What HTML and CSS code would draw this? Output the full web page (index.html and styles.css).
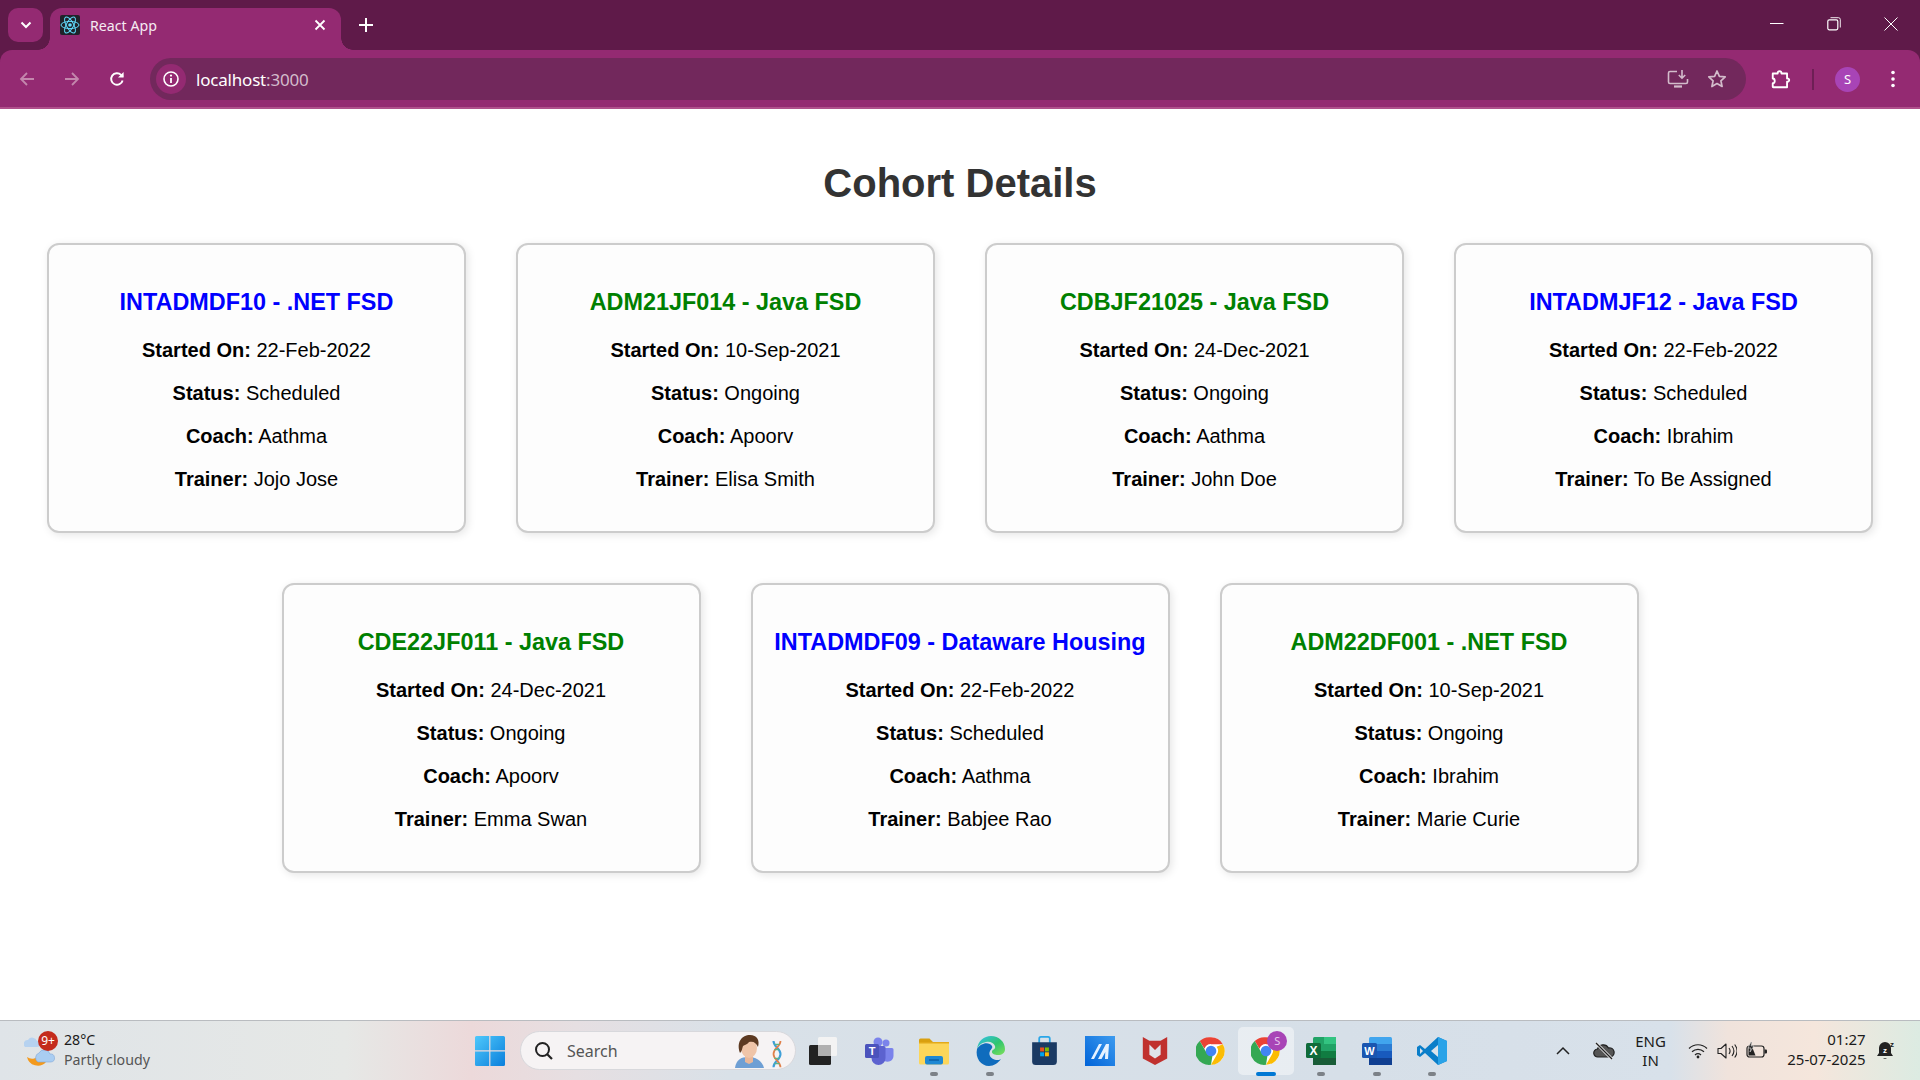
FILE: index.html
```html
<!DOCTYPE html>
<html lang="en">
<head>
<meta charset="utf-8">
<title>React App</title>
<link rel="stylesheet" href="styles.css">
</head>
<body>
<div class="screen">
  <header class="browser">
    <div class="tabstrip">
      <button class="tabsearch"><svg width="14" height="14" viewBox="0 0 14 14"><path d="M2.5 4.5 7 9l4.5-4.5" fill="none" stroke="#fff" stroke-width="2"/></svg></button>
      <div class="tab">
        <svg class="favicon" width="20" height="20" viewBox="0 0 20 20"><rect width="20" height="20" rx="2" fill="#20232a"/><g fill="none" stroke="#61dafb" stroke-width="1"><ellipse cx="10" cy="10" rx="9" ry="3.6"/><ellipse cx="10" cy="10" rx="9" ry="3.6" transform="rotate(60 10 10)"/><ellipse cx="10" cy="10" rx="9" ry="3.6" transform="rotate(120 10 10)"/></g><circle cx="10" cy="10" r="1.8" fill="#61dafb"/></svg>
        <span class="tabtitle">React App</span>
        <svg class="tabclose" width="12" height="12" viewBox="0 0 12 12"><path d="M1.5 1.5l9 9M10.5 1.5l-9 9" stroke="#fff" stroke-width="1.8"/></svg>
      </div>
      <svg class="newtab" width="14" height="14" viewBox="0 0 14 14"><path d="M7 0v14M0 7h14" stroke="#fff" stroke-width="2"/></svg>
      <div class="winctrls">
        <svg width="14" height="14" viewBox="0 0 14 14"><path d="M0 6.5h13.5" stroke="#fff" stroke-width="1"/></svg>
        <svg width="14" height="14" viewBox="0 0 14 14"><rect x=".8" y="2.8" width="10" height="10" rx="1.5" fill="none" stroke="#fff" stroke-width="1.2"/><path d="M3.5.7h8a1.8 1.8 0 0 1 1.8 1.8v8" fill="none" stroke="#fff" stroke-width=".9"/></svg>
        <svg width="14" height="14" viewBox="0 0 14 14"><path d="M.5.5l13 13M13.5.5l-13 13" stroke="#fff" stroke-width="1"/></svg>
      </div>
    </div>
    <div class="toolbar">
      <div class="navbtns">
        <svg width="18" height="18" viewBox="0 0 18 18"><path d="M16 9H3M9 3 3 9l6 6" fill="none" stroke="#c387ad" stroke-width="1.8"/></svg>
        <svg width="18" height="18" viewBox="0 0 18 18"><path d="M2 9h13M9 3l6 6-6 6" fill="none" stroke="#c387ad" stroke-width="1.8"/></svg>
        <svg width="18" height="18" viewBox="0 0 18 18"><path d="M14.6 10.4a5.8 5.8 0 1 1-1.5-5.5L15 6.6" fill="none" stroke="#fff" stroke-width="1.9"/><path d="M15.6 2v5.6H10z" fill="#fff"/></svg>
      </div>
      <div class="omnibox">
        <span class="siteinfo"><svg width="18" height="18" viewBox="0 0 18 18"><circle cx="9" cy="9" r="7" fill="none" stroke="#fff" stroke-width="1.6"/><path d="M9 8v5" stroke="#fff" stroke-width="1.8"/><circle cx="9" cy="5.6" r="1.1" fill="#fff"/></svg></span>
        <span class="url">localhost<span class="port">:3000</span></span>
        <span class="omni-right">
          <svg width="22" height="20" viewBox="0 0 22 20"><path d="M10 2.5H3A1.5 1.5 0 0 0 1.5 4v9A1.5 1.5 0 0 0 3 14.5h16a1.5 1.5 0 0 0 1.5-1.5V10" fill="none" stroke="#d3bccb" stroke-width="1.6"/><path d="M7 17.5h8" stroke="#d3bccb" stroke-width="2.2"/><path d="M15 1v8M11.8 6l3.2 3.2L18.2 6" fill="none" stroke="#d3bccb" stroke-width="1.6"/></svg>
          <svg width="20" height="20" viewBox="0 0 20 20"><path d="m10 2 2.400 5.300 5.800.6-4.300 3.900 1.200 5.700L10 14.600 4.900 17.500l1.200-5.700L1.800 7.900l5.800-.6z" fill="none" stroke="#d3bccb" stroke-width="1.7" stroke-linejoin="round"/></svg>
        </span>
      </div>
      <div class="toolright">
        <svg class="ext" width="22" height="22" viewBox="0 0 20 20"><path d="M2.500 5H7c-.4-2.800 3.800-2.800 3.400 0h5.100v4.600c2.600-.5 2.600 3.300 0 2.800v5.100h-12.500c-.4 0-.5-.3-.5-.5v-3.200c2.400.3 2.400-4.300 0-4.300V5.500c0-.3.200-.5.500-.5z" fill="none" stroke="#fff" stroke-width="1.7" stroke-linejoin="round"/></svg>
        <span class="divider"></span>
        <span class="avatar">S</span>
        <svg class="dots" width="6" height="20" viewBox="0 0 6 20"><circle cx="3" cy="3.5" r="1.8" fill="#fff"/><circle cx="3" cy="10" r="1.8" fill="#fff"/><circle cx="3" cy="16.5" r="1.8" fill="#fff"/></svg>
      </div>
    </div>
  </header>

  <main class="page">
    <h1 class="heading">Cohort Details</h1>
    <div class="cards">
      <article class="card">
        <h3 class="cname scheduled">INTADMDF10 - .NET FSD</h3>
        <p><b>Started On:</b> 22-Feb-2022</p>
        <p><b>Status:</b> Scheduled</p>
        <p><b>Coach:</b> Aathma</p>
        <p><b>Trainer:</b> Jojo Jose</p>
      </article>
      <article class="card">
        <h3 class="cname ongoing">ADM21JF014 - Java FSD</h3>
        <p><b>Started On:</b> 10-Sep-2021</p>
        <p><b>Status:</b> Ongoing</p>
        <p><b>Coach:</b> Apoorv</p>
        <p><b>Trainer:</b> Elisa Smith</p>
      </article>
      <article class="card">
        <h3 class="cname ongoing">CDBJF21025 - Java FSD</h3>
        <p><b>Started On:</b> 24-Dec-2021</p>
        <p><b>Status:</b> Ongoing</p>
        <p><b>Coach:</b> Aathma</p>
        <p><b>Trainer:</b> John Doe</p>
      </article>
      <article class="card">
        <h3 class="cname scheduled">INTADMJF12 - Java FSD</h3>
        <p><b>Started On:</b> 22-Feb-2022</p>
        <p><b>Status:</b> Scheduled</p>
        <p><b>Coach:</b> Ibrahim</p>
        <p><b>Trainer:</b> To Be Assigned</p>
      </article>
      <article class="card">
        <h3 class="cname ongoing">CDE22JF011 - Java FSD</h3>
        <p><b>Started On:</b> 24-Dec-2021</p>
        <p><b>Status:</b> Ongoing</p>
        <p><b>Coach:</b> Apoorv</p>
        <p><b>Trainer:</b> Emma Swan</p>
      </article>
      <article class="card">
        <h3 class="cname scheduled">INTADMDF09 - Dataware Housing</h3>
        <p><b>Started On:</b> 22-Feb-2022</p>
        <p><b>Status:</b> Scheduled</p>
        <p><b>Coach:</b> Aathma</p>
        <p><b>Trainer:</b> Babjee Rao</p>
      </article>
      <article class="card">
        <h3 class="cname ongoing">ADM22DF001 - .NET FSD</h3>
        <p><b>Started On:</b> 10-Sep-2021</p>
        <p><b>Status:</b> Ongoing</p>
        <p><b>Coach:</b> Ibrahim</p>
        <p><b>Trainer:</b> Marie Curie</p>
      </article>
    </div>
  </main>

  <footer class="taskbar">
    <div class="weather">
      <span class="wicon">
        <svg width="32" height="34" viewBox="0 0 32 34"><path d="M3 24a11 11 0 0 0 19 5 8 8 0 0 1-6-8 9 9 0 0 1-13 3z" fill="#f39a1e"/><path d="M14 29a5 5 0 0 1 1-9 6 6 0 0 1 11 1 4 4 0 0 1 1 8z" fill="#a9cdf2" stroke="#7fa8d8" stroke-width=".6"/><path d="M1 14a4 4 0 0 1 3-7 5 5 0 0 1 9 1 3 3 0 0 1 0 6z" fill="#b6d2f0"/></svg>
        <span class="wbadge">9+</span>
      </span>
      <span class="wtext"><span class="wtemp">28°C</span><span class="wdesc">Partly cloudy</span></span>
    </div>
    <div class="center">
      <svg class="start" width="30" height="30" viewBox="0 0 30 30"><defs><linearGradient id="w1" x1="0" y1="0" x2="1" y2="1"><stop offset="0" stop-color="#4fc8fb"/><stop offset="1" stop-color="#0a7fdc"/></linearGradient></defs><path d="M0 1.5A1.5 1.5 0 0 1 1.5 0h12.700v14.200H0zM15.400 0h13.100A1.500 1.500 0 0 1 30 1.500v12.700H15.400zM0 15.400h14.200V30H1.500A1.500 1.500 0 0 1 0 28.500zM15.400 15.400H30v13.100a1.500 1.500 0 0 1-1.500 1.500H15.400z" fill="url(#w1)"/></svg>
      <div class="search">
        <svg width="20" height="20" viewBox="0 0 20 20"><circle cx="8.5" cy="8.5" r="6.5" fill="none" stroke="#222" stroke-width="2"/><path d="m13 13 5 5" stroke="#222" stroke-width="2.2"/></svg>
        <span class="searchtext">Search</span>
        <span class="searchart">
          <svg width="34" height="34" viewBox="0 0 34 34"><path d="M2 34c1-8 6-11 13-11s14 3 16 11z" fill="#6f9fd4"/><path d="M12 22h8v6l-4 2-4-2z" fill="#e9b79a"/><ellipse cx="16" cy="14" rx="8" ry="10" fill="#efc4a8"/><path d="M7 19C3 8 9 1 17 1c7 0 10 5 8 12-2-4-4-6-9-5-2 3-5 3-6 4-1 3-1 5-3 7z" fill="#5d3a22"/></svg>
          <svg width="14" height="28" viewBox="0 0 14 32"><path d="M3 1c0 7 8 8 8 15S3 24 3 31" fill="none" stroke="#3f9fd8" stroke-width="2.4"/><path d="M11 1c0 7-8 8-8 15s8 8 8 15" fill="none" stroke="#e0804a" stroke-width="2"/><path d="M4 5h6M4 11h6M4 21h6M4 27h6" stroke="#5cb487" stroke-width="1.5"/></svg>
        </span>
      </div>
      <div class="apps">
        <span class="app"><svg width="30" height="28" viewBox="0 0 30 28"><rect x="9" y="0" width="19" height="19" rx="1.5" fill="#f3f3f3"/><rect x="0" y="8" width="22" height="20" rx="1.5" fill="#222"/><rect x="9" y="8" width="13" height="11" fill="#b0b0b0"/></svg></span>
        <span class="app"><svg width="30" height="28" viewBox="0 0 30 28"><circle cx="22" cy="6" r="3.5" fill="#7b83eb"/><path d="M17 11h11a1.5 1.5 0 0 1 1.5 1.5V19a6 6 0 0 1-9 5z" fill="#7b83eb"/><circle cx="14" cy="5" r="4.5" fill="#7b83eb"/><path d="M7 9h13a1.5 1.5 0 0 1 1.5 1.5V21a7 7 0 0 1-14 0z" fill="#5c62cf"/><rect x="1" y="7" width="14" height="14" rx="1.5" fill="#4b53bc"/><text x="8" y="18" class="glyph" font-size="11" text-anchor="middle">T</text></svg></span>
        <span class="app has-dot"><svg width="30" height="28" viewBox="0 0 30 28"><path d="M0 3a1.5 1.5 0 0 1 1.5-1.5h9L14 5H0z" fill="#d9a010"/><path d="M0 5h30v21a1.5 1.5 0 0 1-1.5 1.5h-27A1.5 1.5 0 0 1 0 26z" fill="#fcd65a"/><path d="M0 5h30v1.5H0z" fill="#e3aa1a"/><rect x="6" y="19" width="18" height="8.5" rx="2" fill="#1e88d3"/><path d="M10 23h10" stroke="#0b5fa6" stroke-width="1.5"/></svg></span>
        <span class="app has-dot"><svg width="30" height="30" viewBox="0 0 30 30"><defs><linearGradient id="e1" x1="0" y1="0" x2="1" y2="1"><stop offset="0" stop-color="#35c1f1"/><stop offset=".55" stop-color="#2fc56f"/><stop offset="1" stop-color="#7fe05a"/></linearGradient></defs><path d="M2 13C3 5 9 0 16 0c8 0 14 6 14 13 0 4-3 6-7 6-3 0-6-1-6-3 0-3 4-2 3-6-1-3-5-5-9-4-5 1-8 4-9 7z" fill="url(#e1)"/><path d="M2 13c3-6 12-8 15-3 1 2-1 3-2 5-2 4 1 8 6 9 2 0 4 0 5-1-3 4-7 7-12 7C6 30 0 22 2 13z" fill="#0f6cbd"/></svg></span>
        <span class="app"><svg width="29" height="30" viewBox="0 0 30 34"><path d="M9 8V3a2 2 0 0 1 2-2h8a2 2 0 0 1 2 2v5" fill="none" stroke="#2aa6e8" stroke-width="2"/><path d="M1 7h28v22a4 4 0 0 1-4 4H5a4 4 0 0 1-4-4z" fill="#1b3a63"/><rect x="10" y="13" width="4.5" height="4.5" fill="#e8501f"/><rect x="15.5" y="13" width="4.5" height="4.5" fill="#7fba00"/><rect x="10" y="18.5" width="4.5" height="4.5" fill="#00a4ef"/><rect x="15.5" y="18.5" width="4.5" height="4.5" fill="#ffb900"/></svg></span>
        <span class="app"><svg width="30" height="30" viewBox="0 0 30 30"><defs><linearGradient id="m1" x1="1" y1="0" x2="0" y2="1"><stop offset="0" stop-color="#3d9bef"/><stop offset="1" stop-color="#0063d8"/></linearGradient></defs><rect width="30" height="30" fill="url(#m1)"/><path d="M6 23 14 8h3L9 23zM13 23 21 8h3l-1 15h-3l.3-7-3.800 7z" fill="#e6f2ff"/></svg></span>
        <span class="app"><svg width="28" height="30" viewBox="0 0 28 32"><path d="M1 1l7 4h12l7-4v23l-13 7L1 24z" fill="#c0312e"/><path d="M8 9v11l6 4 6-4V9l-6 6z" fill="#dfe3ea"/></svg></span>
        <span class="app"><svg width="30" height="30" viewBox="0 0 48 48"><circle cx="24" cy="24" r="22" fill="#fff"/><path d="M24 2a22 22 0 0 1 19 11H24a11 11 0 0 0-10.5 7.5L6 8A22 22 0 0 1 24 2z" fill="#ea4335"/><path d="M43 13a22 22 0 0 1-19 33l9.500-16.500A11 11 0 0 0 33 17z" fill="#fbbc04"/><path d="M24 46A22 22 0 0 1 6 8l9.500 16.500a11 11 0 0 0 11 6z" fill="#34a853"/><circle cx="24" cy="24" r="8.5" fill="#4285f4"/></svg></span>
        <span class="app active"><svg width="30" height="30" viewBox="0 0 48 48"><circle cx="24" cy="24" r="22" fill="#fff"/><path d="M24 2a22 22 0 0 1 19 11H24a11 11 0 0 0-10.5 7.5L6 8A22 22 0 0 1 24 2z" fill="#ea4335"/><path d="M43 13a22 22 0 0 1-19 33l9.500-16.500A11 11 0 0 0 33 17z" fill="#fbbc04"/><path d="M24 46A22 22 0 0 1 6 8l9.500 16.500a11 11 0 0 0 11 6z" fill="#34a853"/><circle cx="24" cy="24" r="8.5" fill="#4285f4"/></svg><span class="appbadge">S</span></span>
        <span class="app has-dot"><svg width="30" height="30" viewBox="0 0 30 30"><rect x="7" y="1" width="23" height="28" rx="1.5" fill="#21a366"/><rect x="18" y="1" width="12" height="7" fill="#33c481"/><rect x="7" y="15" width="23" height="7" fill="#107c41"/><rect x="7" y="22" width="23" height="7" fill="#185c37"/><rect x="0" y="7" width="15" height="15" rx="1.5" fill="#0f6b3a"/><text x="7.5" y="18.5" class="glyph" font-size="12" text-anchor="middle">X</text></svg></span>
        <span class="app has-dot"><svg width="30" height="30" viewBox="0 0 30 30"><rect x="7" y="1" width="23" height="28" rx="1.5" fill="#41a5ee"/><rect x="7" y="8" width="23" height="7" fill="#2b7cd3"/><rect x="7" y="15" width="23" height="7" fill="#185abd"/><rect x="7" y="22" width="23" height="7" fill="#103f91"/><rect x="0" y="7" width="15" height="15" rx="1.5" fill="#1a56b0"/><text x="7.5" y="18.5" class="glyph" font-size="11" text-anchor="middle">W</text></svg></span>
        <span class="app has-dot"><svg width="30" height="30" viewBox="0 0 30 30"><path d="M21 1 30 5v20l-9 4L8 17 3 21l-3-2v-8l3-2 5 4z" fill="#0a7ec9"/><path d="M21 1 30 5v20l-9 4z" fill="#2aa3e8"/><path d="M21 9v12l-7-6z" fill="#dbe3eb"/><path d="M3 12v6l3-3z" fill="#dbe3eb"/></svg></span>
      </div>
    </div>
    <div class="tray">
      <svg class="chev" width="14" height="9" viewBox="0 0 14 9"><path d="m1 8 6-6 6 6" fill="none" stroke="#222" stroke-width="1.5"/></svg>
      <svg class="cloud" width="22" height="18" viewBox="0 0 22 18"><path d="M5 15a4 4 0 0 1-.5-8 6 6 0 0 1 11-1 4.5 4.5 0 0 1 2 9z" fill="#555" stroke="#222" stroke-width="1.2"/><path d="M3 1l16 16" stroke="#e8e8ea" stroke-width="3"/><path d="M3 1l16 16" stroke="#222" stroke-width="1.2"/></svg>
      <span class="lang">ENG<br>IN</span>
      <span class="sysicons">
        <svg width="20" height="16" viewBox="0 0 20 16"><path d="M1 5.5c5-5 13-5 18 0M4 8.800c3.500-3.300 8.500-3.300 12 0M7 12c1.700-1.500 4.300-1.500 6 0" fill="none" stroke="#222" stroke-width="1.2"/><circle cx="10" cy="14" r="1.4" fill="#222"/></svg>
        <svg width="20" height="18" viewBox="0 0 20 18"><path d="M1 6.5h3L9 2v14l-5-4.500H1z" fill="none" stroke="#222" stroke-width="1.1" stroke-linejoin="round"/><path d="M12 6c1.300 1.800 1.300 4.200 0 6M15 4c2.300 3 2.300 7 0 10M17.700 2.500c3 4 3 9 0 13" fill="none" stroke="#222" stroke-width="1.1"/></svg>
        <svg width="22" height="18" viewBox="0 0 22 18"><rect x="1" y="4" width="17" height="11" rx="2.5" fill="none" stroke="#222" stroke-width="1.2"/><path d="M18.500 7.500h1.500a1 1 0 0 1 1 1v2a1 1 0 0 1-1 1h-1.500z" fill="#222"/><path d="M2.500 13.500V6h4l3 7.500z" fill="#222"/><path d="M5 0 2 6h3l-1 4 4-6H5l1-4z" fill="#222" stroke="#e8e6e6" stroke-width=".6"/></svg>
      </span>
      <span class="clock"><span>01:27</span><span>25-07-2025</span></span>
      <svg class="bell" width="18" height="20" viewBox="0 0 18 20"><path d="M8 1a6 6 0 0 0-6 6v5l-2 3h16l-2-3V7a6 6 0 0 0-6-6z" fill="#222"/><path d="M6 17a2.500 2 0 0 0 4 0z" fill="#222"/><text x="8" y="11.5" class="zz" font-size="8" text-anchor="middle">z</text><text x="15" y="6" class="zzd" font-size="8" text-anchor="middle">z</text></svg>
    </div>
  </footer>
</div>
</body>
</html>
```

FILE: styles.css
```css
* { box-sizing: border-box; }
html, body { margin: 0; padding: 0; height: 100%; overflow: hidden; }
body { font-family: "Liberation Sans", Arial, sans-serif; background: #fff; }
svg { display: block; flex: none; }
.screen { height: 1080px; display: flex; flex-direction: column; }

/* browser chrome */
.browser { flex: none; height: 109px; background: #5f1a49; display: flex; flex-direction: column; font-family: "Noto Sans", "Open Sans", sans-serif; color: #fff; }
.tabstrip { height: 50px; display: flex; align-items: flex-start; padding-left: 8px; }
.tabsearch { width: 35px; height: 34px; margin-top: 8px; border: 0; border-radius: 10px; background: #942a72; display: flex; align-items: center; justify-content: center; padding: 0; }
.tab { position: relative; width: 291px; height: 42px; margin: 8px 0 0 7px; background: #942a72; border-radius: 12px 12px 0 0; display: flex; align-items: center; padding: 0 15px 8px 10px; }
.tab::before, .tab::after { content: ""; position: absolute; bottom: 0; width: 12px; height: 12px; }
.tab::before { left: -12px; background: radial-gradient(circle at 0 0, transparent 11.5px, #942a72 12px); }
.tab::after { right: -12px; background: radial-gradient(circle at 100% 0, transparent 11.5px, #942a72 12px); }
.tabtitle { font-size: 14.2px; margin-left: 10px; flex: 1; color: #f6eaf2; }
.newtab { margin: 18px 0 0 18px; }
.winctrls { margin-left: auto; display: flex; gap: 43px; padding: 17px 22px 0 0; }
.toolbar { height: 59px; background: #942a72; border-bottom: 2px solid #b0508c; border-radius: 12px 12px 0 0; display: flex; align-items: flex-start; padding-top: 8px; }
.navbtns { width: 150px; height: 42px; display: flex; align-items: center; gap: 27px; padding-left: 18px; }
.omnibox { width: 1596px; height: 42px; border-radius: 21px; background: #72285c; display: flex; align-items: center; padding: 0 19px 0 6px; }
.siteinfo { width: 30px; height: 30px; border-radius: 50%; background: #942a72; display: flex; align-items: center; justify-content: center; }
.url { font-size: 17px; margin-left: 10px; color: #fff; flex: 1; letter-spacing: -.2px; }
.port { color: #d3bccb; }
.omni-right { display: flex; align-items: center; gap: 18px; }
.toolright { flex: 1; height: 42px; display: flex; align-items: center; padding-left: 24px; }
.divider { width: 2px; height: 21px; background: #6e1f55; margin-left: 20px; }
.avatar { width: 25px; height: 25px; border-radius: 50%; background: #a844b6; font-size: 13px; display: flex; align-items: center; justify-content: center; margin-left: 21px; }
.dots { margin-left: 30px; }

/* page */
.page { flex: 1; min-height: 0; background: #fff; }
.heading { margin: 51px 0 12px; text-align: center; font-size: 40px; line-height: 46px; font-weight: 700; color: #333; }
.cards { display: flex; flex-wrap: wrap; justify-content: center; }
.card { width: 419px; height: 290px; margin: 25px; padding: 0 18px; background: #fdfdfd; border: 2px solid #ccc; border-radius: 12px; box-shadow: 2px 2px 8px rgba(0,0,0,.1); text-align: center; color: #000; }
.cname { margin: 44px 0 23px; font-size: 23.4px; line-height: 27px; font-weight: 700; }
.card p { margin: 0 0 20px; font-size: 20px; line-height: 23px; }
.scheduled { color: #00f; }
.ongoing { color: #008000; }

/* taskbar */
.taskbar { flex: none; height: 60px; border-top: 1px solid #b9bcc0; display: flex; align-items: center; font-family: "Noto Sans", "Open Sans", sans-serif; color: #1b1b1b; background: linear-gradient(90deg, #dfe4e8 0, #e6e8e6 18%, #ecd9da 24.5%, #e6dfe2 30%, #d9e1e8 38%, #d6dfe8 70%, #d8e1ea 87%, #f0e3dc 90%, #f5e6dc 94.5%, #dcebe2 100%); }
.weather { flex: none; width: 462px; display: flex; align-items: center; padding-left: 24px; }
.wicon { position: relative; width: 40px; height: 36px; }
.wbadge { position: absolute; left: 14px; top: -2px; width: 20px; height: 20px; border-radius: 50%; background: #c42b1c; color: #fff; font-size: 12px; line-height: 20px; text-align: center; }
.wtext { display: flex; flex-direction: column; font-size: 14.2px; line-height: 20px; margin-top: -2px; }
.wdesc { color: #555; }
.center { flex: none; display: flex; align-items: center; }
.start { margin: 0 15px 0 13px; }
.search { flex: none; width: 276px; height: 39px; border-radius: 20px; background: #f6f3f4; border: 1px solid #d8d8dc; display: flex; align-items: center; padding: 0 11px 0 13px; }
.searchtext { margin-left: 13px; font-size: 16px; color: #555; flex: 1; }
.searchart { display: flex; align-items: flex-end; gap: 3px; }
.apps { flex: none; display: flex; }
.app { position: relative; width: 55.3px; height: 48px; display: flex; align-items: center; justify-content: center; }
.has-dot::after { content: ""; position: absolute; left: 50%; bottom: -1px; width: 8px; height: 4px; margin-left: -4px; border-radius: 2px; background: #7c8187; }
.active { background: rgba(255,255,255,.45); border-radius: 5px; }
.active::after { content: ""; position: absolute; left: 50%; bottom: -1px; width: 20px; height: 4px; margin-left: -10px; border-radius: 2px; background: #0078d4; }
.appbadge { position: absolute; left: 29px; top: 4px; width: 20px; height: 20px; border-radius: 50%; background: #a844b6; color: #e7c9ee; font-size: 11px; line-height: 20px; text-align: center; }
.glyph { fill: #fff; font-family: "Liberation Sans", sans-serif; font-weight: 700; }
.zz { fill: #fff; font-family: "Liberation Sans", sans-serif; font-weight: 700; }
.zzd { fill: #222; font-family: "Liberation Sans", sans-serif; font-weight: 700; }
.tray { flex: 1; display: flex; align-items: center; padding-left: 96px; }
.cloud { margin-left: 23px; }
.lang { width: 50px; margin-left: 11px; text-align: center; font-size: 15px; line-height: 19px; }
.sysicons { display: flex; align-items: center; gap: 9px; margin-left: 12px; }
.clock { display: flex; flex-direction: column; align-items: flex-end; width: 92px; font-size: 15px; line-height: 20px; margin: -3px 0 0 6px; }
.bell { margin-left: 11px; }
```
